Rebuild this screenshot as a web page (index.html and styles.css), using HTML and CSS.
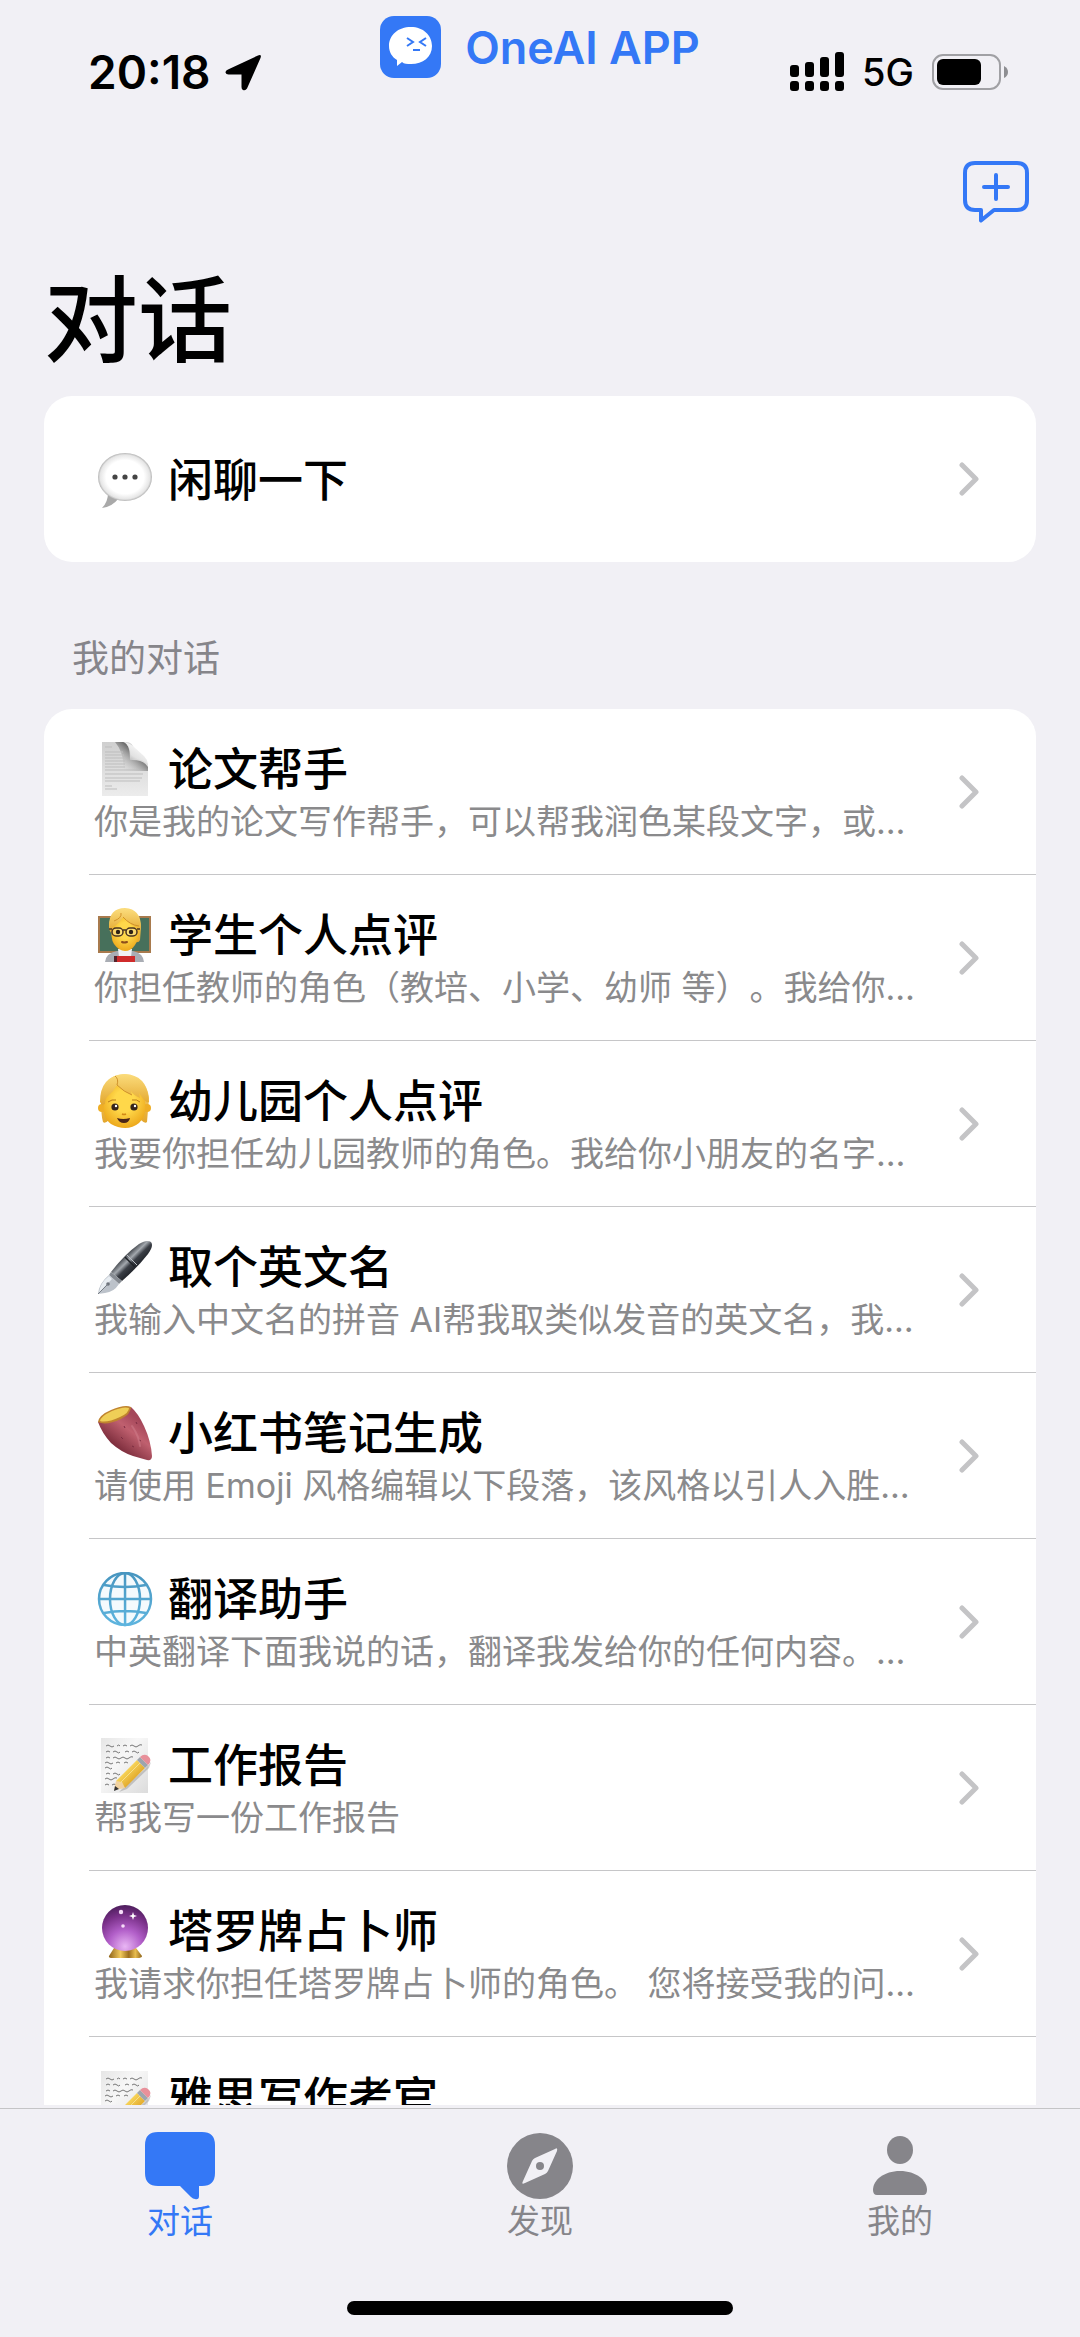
FILE: index.html
```
<!DOCTYPE html>
<html lang="zh-CN">
<head>
    <meta charset="UTF-8">
    <meta name="viewport" content="width=device-width, initial-scale=1.0">
    <title>OneAI APP</title>
    <link rel="stylesheet" href="styles.css">
</head>
<body>
    <!-- Shared icons -->
    <svg class="sprite" width="0" height="0" aria-hidden="true">
        <defs>
            <linearGradient id="paper" x1="0" y1="0" x2="1" y2="1">
                <stop offset="0" stop-color="#e6e6e6"/>
                <stop offset="0.4" stop-color="#f7f7f7"/>
                <stop offset="1" stop-color="#dcdcdc"/>
            </linearGradient>
            <linearGradient id="pencil" x1="0" y1="0" x2="1" y2="1">
                <stop offset="0.3" stop-color="#fbdc62"/>
                <stop offset="0.7" stop-color="#e0a526"/>
            </linearGradient>
            <radialGradient id="skin" cx="0.5" cy="0.4" r="0.6">
                <stop offset="0.4" stop-color="#ffd84a"/>
                <stop offset="1" stop-color="#eda91c"/>
            </radialGradient>
            <linearGradient id="hair" x1="0" y1="0" x2="0" y2="1">
                <stop offset="0" stop-color="#fbdc7c"/>
                <stop offset="1" stop-color="#e3a62d"/>
            </linearGradient>
        </defs>
        <symbol id="chevron" viewBox="0 0 20 34">
            <path d="M3 3L17 17L3 31" fill="none" stroke="#c4c4c6" stroke-width="5" stroke-linecap="round" stroke-linejoin="round"/>
        </symbol>
        <symbol id="memo" viewBox="0 0 56 56">
            <rect x="4" y="0" width="47" height="55" fill="url(#paper)"/>
            <g fill="none" stroke="#777" stroke-width="1">
                <path d="M9 8q2-2 4 0t4 0m3 0q2-2 3 0m3 0q2-2 4 0m3 0q2-2 4 0t4 0t4-1"/>
                <path d="M9 14q2-2 4 0m3 0q2-2 4 0t3 0m5 0q2-2 4 0m3 0q2-2 4 0t3 0"/>
                <path d="M9 20q2-2 4 0m3 0q2-2 4 0t4 0t4 0t4 0t4-1"/>
                <path d="M8 25q2-2 4 0t4 0m3 0q2-2 4 0m4 0q2-2 4 0"/>
                <path d="M8 30q2-2 4 0t3 0"/>
                <path d="M9 36q2-2 4 0m3 0q2-2 4 0t3 0"/>
                <path d="M8 41q2-2 4 0t4 0t4-1"/>
                <path d="M8 47q2-2 4 0m3 0q2-2 4 0"/>
            </g>
            <path d="M22 54L30 51L52 30L54 24L48 31L27 49Z" fill="#999" opacity="0.5"/>
            <path d="M19 43L40 22L48 30L28 50Z" fill="url(#pencil)"/>
            <path d="M19 43L17 52L28 50L25 44Z" fill="#f1d2a0"/>
            <path d="M18 48L17 53L22 51Z" fill="#333"/>
            <path d="M22 46L43 25" stroke="#f7e08a" stroke-width="1"/>
            <path d="M40 22L43 19L51 27L48 30Z" fill="#9da5ad"/>
            <path d="M43 19Q47 15 51 18Q56 22 51 27Z" fill="#e8909a"/>
        </symbol>
    </svg>

    <div class="app">
        <header class="status-bar">
            <div class="status-left">
                <span class="time">20:18</span>
                <svg width="37" height="37" viewBox="0 0 37 37" aria-hidden="true">
                    <path d="M3 15.500L33 1.500Q37 0 35.500 4L22 34.500Q20.500 37 18 36Q16.500 35.500 16.500 33V20.500H3.500Q1 20.500 .5 18.500Q.2 16.800 3 15.500Z"/>
                </svg>
            </div>
            <div class="brand">
                <svg width="61" height="62" viewBox="0 0 61 62" aria-hidden="true">
                    <rect width="61" height="62" rx="14" fill="#3478f6"/>
                    <path d="M31 11C43 11 52 19 52 30C52 41 43 48 31 48C27 48 24 48 22 46L17 50L17 44C12 41 9 36 9 30C9 19 18 11 31 11Z" fill="#fff"/>
                    <path d="M27 22L33 26L27 30M46 22L40 26L46 30M33 34H40" fill="none" stroke="#3478f6" stroke-width="2"/>
                </svg>
                <span class="brand-name">OneAI APP</span>
            </div>
            <div class="status-right">
                <svg width="54" height="40" viewBox="0 0 54 40" aria-hidden="true">
                    <rect x="0" y="13" width="9" height="12" rx="3"/>
                    <rect x="15" y="10" width="9" height="15" rx="3"/>
                    <rect x="30" y="5" width="9" height="20" rx="3"/>
                    <rect x="45" y="0" width="9" height="25" rx="3"/>
                    <rect x="0" y="29" width="9" height="10" rx="3"/>
                    <rect x="15" y="29" width="9" height="10" rx="3"/>
                    <rect x="30" y="29" width="9" height="10" rx="3"/>
                    <rect x="45" y="29" width="9" height="10" rx="3"/>
                </svg>
                <span class="network">5G</span>
                <svg width="76" height="36" viewBox="0 0 76 36" aria-hidden="true">
                    <rect x="1" y="1" width="67" height="34" rx="10" fill="none" stroke="#a0a0a4" stroke-width="2"/>
                    <rect x="5" y="5" width="44" height="26" rx="6"/>
                    <path d="M72 12Q76 14 76 18T72 24Z" fill="#8e8e92"/>
                </svg>
            </div>
        </header>

        <div class="nav-bar">
            <button type="button" class="new-chat" aria-label="新建对话">
                <svg width="66" height="62" viewBox="0 0 66 62" aria-hidden="true">
                    <path d="M12 2H54Q64 2 64 12V39Q64 49 54 49H31L18 59.500V49H12Q2 49 2 39V12Q2 2 12 2Z" fill="none" stroke="#3478f6" stroke-width="4" stroke-linejoin="round"/>
                    <path d="M21 26H45M33 14V38" stroke="#3478f6" stroke-width="4" stroke-linecap="round"/>
                </svg>
            </button>
        </div>

        <main class="content">
            <h1>对话</h1>

            <ul class="card">
                <li class="row">
                    <a href="#" class="row-link">
                        <div class="row-text">
                            <div class="row-title">
                                <svg class="emoji" viewBox="0 0 56 56" aria-hidden="true">
                                    <defs>
                                        <radialGradient id="bubble" cx="0.5" cy="0.5" r="0.5">
                                            <stop offset="0.7" stop-color="#fff"/>
                                            <stop offset="0.92" stop-color="#e6e6e6"/>
                                            <stop offset="1" stop-color="#b4b4b4"/>
                                        </radialGradient>
                                    </defs>
                                    <path d="M11 40Q11 49 5 55Q15 54 22 45Z" fill="#a9a9a9"/>
                                    <ellipse cx="28" cy="24" rx="27" ry="24" fill="url(#bubble)"/>
                                    <circle cx="18" cy="24" r="2.600" fill="#444"/>
                                    <circle cx="28" cy="24" r="2.600" fill="#444"/>
                                    <circle cx="38" cy="24" r="2.600" fill="#444"/>
                                </svg>
                                <h2>闲聊一下</h2>
                            </div>
                        </div>
                        <svg class="chevron" aria-hidden="true"><use href="#chevron"/></svg>
                    </a>
                </li>
            </ul>

            <h3 class="section-title">我的对话</h3>

            <ul class="card">
                <li class="row">
                    <a href="#" class="row-link">
                        <div class="row-text">
                            <div class="row-title">
                                <svg class="emoji" viewBox="0 0 56 56" aria-hidden="true">
                                    <defs>
                                        <linearGradient id="sheet" x1="0" y1="0" x2="0" y2="1">
                                            <stop offset="0" stop-color="#cfcfcf"/>
                                            <stop offset="1" stop-color="#ececec"/>
                                        </linearGradient>
                                        <linearGradient id="curl" x1="0.2" y1="1" x2="0.8" y2="0.1">
                                            <stop offset="0" stop-color="#9a9a9a"/>
                                            <stop offset="0.4" stop-color="#e2e2e2"/>
                                            <stop offset="1" stop-color="#fff"/>
                                        </linearGradient>
                                        <linearGradient id="curlShade" x1="1" y1="0" x2="0" y2="1">
                                            <stop offset="0.3" stop-color="#4a4a4a"/>
                                            <stop offset="0.9" stop-color="#ddd" stop-opacity="0"/>
                                        </linearGradient>
                                    </defs>
                                    <path d="M5 0H29Q36 0 37 8L51 22V54H5Z" fill="url(#sheet)"/>
                                    <path d="M18 0H26Q33 1 33 18Q46 17 51 25V29H26Q28 12 18 0Z" fill="url(#curlShade)"/>
                                    <path d="M27 0Q33 1 37 5L47 14Q51 18 51 23Q46 16 33 18Q35 5 27 0Z" fill="url(#curl)"/>
                                    <path d="M8 5H15M8 10H26M8 13H27M8 16H28M8 19H28M8 22H28M8 25H28M8 28H42M8 32H46M8 36H45M8 39H43M8 44H15M8 47H20" stroke="#bdbdbd" stroke-width="1"/>
                                </svg>
                                <h2>论文帮手</h2>
                            </div>
                            <p>你是我的论文写作帮手，可以帮我润色某段文字，或…</p>
                        </div>
                        <svg class="chevron" aria-hidden="true"><use href="#chevron"/></svg>
                    </a>
                </li>
                <li class="row">
                    <a href="#" class="row-link">
                        <div class="row-text">
                            <div class="row-title">
                                <svg class="emoji" viewBox="0 0 56 56" aria-hidden="true">
                                    <rect x="1" y="8" width="53" height="37" fill="#a87a4d"/>
                                    <rect x="3" y="10" width="49" height="33" fill="#47705b"/>
                                    <path d="M8 54Q9 45 20 43H36Q46 45 47 54Z" fill="#a9adb4"/>
                                    <path d="M21 41H35L34 49H22Z" fill="#f0f2f4"/>
                                    <rect x="17" y="48" width="21" height="6" fill="#cf2b2b"/>
                                    <rect x="17" y="48" width="3" height="6" fill="#54222a"/>
                                    <path d="M12 18Q12 0 28 0Q44 1 44 19L43 32Q42 35 38 34L34 14H16L15 24Q12 24 12 18Z" fill="url(#hair)"/>
                                    <path d="M15 16Q13 30 17 36Q22 43 28 43Q34 43 38 37Q43 30 42 20Q36 17 27 9Z" fill="url(#skin)"/>
                                    <path d="M12 20Q12 3 26 1Q42 2 44 20Q36 20 26 9Q22 16 16 19L14 25Z" fill="url(#hair)"/>
                                    <path d="M17 13Q25 10 24 5M26 9Q33 17 42 18" fill="none" stroke="#d1922a" stroke-width="1"/>
                                    <g fill="#fff" fill-opacity="0.25" stroke="#493321" stroke-width="1.500">
                                        <rect x="15" y="20" width="11" height="8" rx="4"/>
                                        <rect x="29" y="20" width="11" height="8" rx="4"/>
                                    </g>
                                    <path d="M26 22H29M12 21H15M40 21H43" stroke="#493321" stroke-width="1.500"/>
                                    <circle cx="21" cy="24" r="2.200" fill="#2e2016"/>
                                    <circle cx="34" cy="24" r="2.200" fill="#2e2016"/>
                                    <path d="M25 34Q27 35 30 34" fill="none" stroke="#8d4e1b" stroke-width="2" stroke-linecap="round"/>
                                </svg>
                                <h2>学生个人点评</h2>
                            </div>
                            <p>你担任教师的角色（教培、小学、幼师 等）。我给你…</p>
                        </div>
                        <svg class="chevron" aria-hidden="true"><use href="#chevron"/></svg>
                    </a>
                </li>
                <li class="row">
                    <a href="#" class="row-link">
                        <div class="row-text">
                            <div class="row-title">
                                <svg class="emoji" viewBox="0 0 56 56" aria-hidden="true">
                                    <path d="M6 48Q4 42 4 24Q7 0 28 0Q49 1 52 24L50 48Q48 50 44 46H12Q8 50 6 48Z" fill="url(#hair)"/>
                                    <circle cx="5" cy="34" r="4" fill="#efae25"/>
                                    <circle cx="50" cy="34" r="4" fill="#efae25"/>
                                    <path d="M7 28Q5 44 14 50Q21 54 28 54Q36 54 42 49Q50 43 48 27Q42 10 28 9Q12 12 7 28Z" fill="url(#skin)"/>
                                    <path d="M3 28Q3 2 27 0Q51 2 52 28Q50 29 47 26Q45 23 42 19L43 24Q36 21 34 17L35 21Q25 17 20 11Q17 17 12 21Q8 24 8 30L5 31Z" fill="url(#hair)"/>
                                    <path d="M20 11Q22 5 18 2M20 11Q27 18 35 21" fill="none" stroke="#cf922b" stroke-width="1"/>
                                    <circle cx="18" cy="33" r="3.600" fill="#36251a"/>
                                    <circle cx="37" cy="33" r="3.600" fill="#36251a"/>
                                    <circle cx="19" cy="32" r="1.200" fill="#fff"/>
                                    <circle cx="38" cy="32" r="1.200" fill="#fff"/>
                                    <path d="M11 28Q15 25 19 26M35 26Q40 25 43 28" fill="none" stroke="#b97a19" stroke-width="1"/>
                                    <path d="M25 40Q27 41 29 40" fill="none" stroke="#d28a16" stroke-width="1.500"/>
                                    <path d="M20 44Q26 46 33 44Q32 49 27 49Q22 49 20 44Z" fill="#4a2518"/>
                                </svg>
                                <h2>幼儿园个人点评</h2>
                            </div>
                            <p>我要你担任幼儿园教师的角色。我给你小朋友的名字…</p>
                        </div>
                        <svg class="chevron" aria-hidden="true"><use href="#chevron"/></svg>
                    </a>
                </li>
                <li class="row">
                    <a href="#" class="row-link">
                        <div class="row-text">
                            <div class="row-title">
                                <svg class="emoji" viewBox="0 0 56 56" aria-hidden="true">
                                    <defs>
                                        <linearGradient id="barrel" x1="0.35" y1="0.35" x2="0.65" y2="0.65">
                                            <stop offset="0" stop-color="#3c4046"/>
                                            <stop offset="0.35" stop-color="#a3a8ae"/>
                                            <stop offset="0.6" stop-color="#3a3e45"/>
                                            <stop offset="1" stop-color="#202329"/>
                                        </linearGradient>
                                    </defs>
                                    <path d="M14 32Q28 14 42 4Q50-1 54 2Q57 6 51 14Q41 27 25 41Z" fill="url(#barrel)"/>
                                    <path d="M28 17L38 27" stroke="#1e2126" stroke-width="1.500"/>
                                    <path d="M30 15L40 25" stroke="#b9bdc3" stroke-width="1"/>
                                    <path d="M14 32L25 41L22 44L12 35Z" fill="#868b92"/>
                                    <path d="M12 35L22 44Q17 52 8 53L1 54Q2 43 12 35Z" fill="#bcc2ca"/>
                                    <path d="M12 36L15 39Q9 45 2 53Q3 43 12 36Z" fill="#e8edf2"/>
                                    <circle cx="11" cy="44" r="1.800" fill="#6d737b"/>
                                    <path d="M1 54L11 44" stroke="#777d85" stroke-width="1"/>
                                </svg>
                                <h2>取个英文名</h2>
                            </div>
                            <p>我输入中文名的拼音 AI帮我取类似发音的英文名，我…</p>
                        </div>
                        <svg class="chevron" aria-hidden="true"><use href="#chevron"/></svg>
                    </a>
                </li>
                <li class="row">
                    <a href="#" class="row-link">
                        <div class="row-text">
                            <div class="row-title">
                                <svg class="emoji" viewBox="0 0 56 56" aria-hidden="true">
                                    <defs>
                                        <linearGradient id="potato" x1="0.7" y1="0.2" x2="0.3" y2="0.7">
                                            <stop offset="0" stop-color="#a5475a"/>
                                            <stop offset="0.4" stop-color="#c0606f"/>
                                            <stop offset="1" stop-color="#80303f"/>
                                        </linearGradient>
                                    </defs>
                                    <path d="M1 16Q5 27 14 37Q24 46 36 50L50 54Q55 55 55 50Q54 35 47 20Q41 7 34 1Z" fill="url(#potato)"/>
                                    <path d="M1 16Q2 9 14 4Q28-2 34 1Q34 8 24 13Q9 20 1 16Z" fill="#c0842f"/>
                                    <path d="M3 15Q4 10 15 5Q27 0 32 2Q32 7 23 11Q10 17 3 15Z" fill="#efcf57"/>
                                    <path d="M39 16L40 18M27 20L28 22M42 34L44 35M24 31L26 33M35 40L37 41" stroke="#7b2c41" stroke-width="1"/>
                                    <path d="M35 20Q42 30 43 40" fill="none" stroke="#d2808e" stroke-width="2" opacity="0.5" stroke-linecap="round"/>
                                </svg>
                                <h2>小红书笔记生成</h2>
                            </div>
                            <p>请使用 Emoji 风格编辑以下段落，该风格以引人入胜…</p>
                        </div>
                        <svg class="chevron" aria-hidden="true"><use href="#chevron"/></svg>
                    </a>
                </li>
                <li class="row">
                    <a href="#" class="row-link">
                        <div class="row-text">
                            <div class="row-title">
                                <svg class="emoji" viewBox="0 0 56 56" aria-hidden="true">
                                    <defs>
                                        <linearGradient id="globe" x1="0" y1="0" x2="0" y2="56" gradientUnits="userSpaceOnUse">
                                            <stop offset="0" stop-color="#4795bf"/>
                                            <stop offset="1" stop-color="#5fb6e0"/>
                                        </linearGradient>
                                    </defs>
                                    <g fill="none" stroke="url(#globe)" stroke-width="2.500">
                                        <circle cx="28" cy="27" r="26" fill="#f4fafd"/>
                                        <ellipse cx="28" cy="27" rx="15" ry="26"/>
                                        <path d="M28 1L28.100 53M2 27L54 27.100M7 13Q28 17 49 13M7 41Q28 37 49 41"/>
                                    </g>
                                </svg>
                                <h2>翻译助手</h2>
                            </div>
                            <p>中英翻译下面我说的话，翻译我发给你的任何内容。…</p>
                        </div>
                        <svg class="chevron" aria-hidden="true"><use href="#chevron"/></svg>
                    </a>
                </li>
                <li class="row">
                    <a href="#" class="row-link">
                        <div class="row-text">
                            <div class="row-title">
                                <svg class="emoji" aria-hidden="true"><use href="#memo"/></svg>
                                <h2>工作报告</h2>
                            </div>
                            <p>帮我写一份工作报告</p>
                        </div>
                        <svg class="chevron" aria-hidden="true"><use href="#chevron"/></svg>
                    </a>
                </li>
                <li class="row">
                    <a href="#" class="row-link">
                        <div class="row-text">
                            <div class="row-title">
                                <svg class="emoji" viewBox="0 0 56 56" aria-hidden="true">
                                    <defs>
                                        <radialGradient id="ball" cx="0.5" cy="0.9" r="0.9">
                                            <stop offset="0" stop-color="#e9b6f4"/>
                                            <stop offset="0.4" stop-color="#b25fc9"/>
                                            <stop offset="0.75" stop-color="#793088"/>
                                            <stop offset="1" stop-color="#4d1e5c"/>
                                        </radialGradient>
                                        <linearGradient id="stand">
                                            <stop offset="0" stop-color="#8f6419"/>
                                            <stop offset="0.35" stop-color="#f1ca5d"/>
                                            <stop offset="0.6" stop-color="#9e6e1e"/>
                                            <stop offset="0.8" stop-color="#e8bd4e"/>
                                            <stop offset="1" stop-color="#8f6419"/>
                                        </linearGradient>
                                    </defs>
                                    <path d="M17 44H39L45 52Q45 54 40 54H16Q11 54 12 52Z" fill="url(#stand)"/>
                                    <circle cx="28" cy="24" r="23" fill="url(#ball)"/>
                                    <path d="M36 8L37 11L40 12L37 13L36 16L35 13L32 12L35 11Z" fill="#fff"/>
                                    <circle cx="24" cy="8" r="2.200" fill="#f6dcf8"/>
                                    <circle cx="26" cy="22" r="1.800" fill="#f6dcf8"/>
                                </svg>
                                <h2>塔罗牌占卜师</h2>
                            </div>
                            <p>我请求你担任塔罗牌占卜师的角色。 您将接受我的问…</p>
                        </div>
                        <svg class="chevron" aria-hidden="true"><use href="#chevron"/></svg>
                    </a>
                </li>
                <li class="row">
                    <a href="#" class="row-link">
                        <div class="row-text">
                            <div class="row-title">
                                <svg class="emoji" aria-hidden="true"><use href="#memo"/></svg>
                                <h2>雅思写作考官</h2>
                            </div>
                            <p></p>
                        </div>
                    </a>
                </li>
            </ul>
        </main>

        <footer class="tab-bar">
            <nav class="tabs">
                <a href="#" class="tab active">
                    <svg width="70" height="68" viewBox="0 0 70 68" aria-hidden="true">
                        <path d="M13 0H57Q70 0 70 13V41Q70 54 57 54H54V64Q54 68 50 67Q48 67 46 65L35 54H13Q0 54 0 41V13Q0 0 13 0Z" fill="#3478f6"/>
                    </svg>
                    <span>对话</span>
                </a>
                <a href="#" class="tab">
                    <svg width="68" height="68" viewBox="0 0 68 68" aria-hidden="true">
                        <circle cx="34" cy="34" r="33" fill="#86858a"/>
                        <path d="M49 17Q52 15 51 19L42 39Q41 41 39 42L19 51Q15 53 17 49L26 29Q27 27 29 26Z" fill="#f1f0f5"/>
                        <circle cx="34" cy="34" r="4" fill="#86858a"/>
                    </svg>
                    <span>发现</span>
                </a>
                <a href="#" class="tab">
                    <svg width="68" height="68" viewBox="0 0 68 68" aria-hidden="true">
                        <ellipse cx="34" cy="18" rx="13" ry="14" fill="#86858a"/>
                        <path d="M34 39C50 39 61 48 61 58Q61 63 57 63H11Q7 63 7 58C7 48 18 39 34 39Z" fill="#86858a"/>
                    </svg>
                    <span>我的</span>
                </a>
            </nav>
            <div class="home-indicator"></div>
        </footer>
    </div>
</body>
</html>
```
FILE: styles.css
```
* {
    box-sizing: border-box;
    margin: 0;
    padding: 0;
}
body {
    font-family: Inter, "Noto Sans CJK SC", sans-serif;
    background-color: #f1f0f5;
    color: #000;
    text-spacing-trim: space-all;
}
a {
    color: inherit;
    text-decoration: none;
}
ul {
    list-style: none;
}
svg {
    display: block;
    flex-shrink: 0;
}
.sprite {
    position: absolute;
}
.app {
    display: flex;
    flex-direction: column;
    height: 100vh;
    overflow: hidden;
}

/* Status bar */
.status-bar {
    display: grid;
    grid-template-columns: 1fr auto 1fr;
    align-items: center;
    height: 144px;
    padding: 0 72px;
    flex-shrink: 0;
}
.status-left,
.status-right {
    display: flex;
    align-items: center;
    gap: 14px;
}
.status-left {
    padding-left: 16px;
}
.status-right {
    justify-content: flex-end;
    gap: 18px;
}
.time {
    font-size: 46px;
    font-weight: 600;
    line-height: 56px;
}
.network {
    font-size: 38px;
    font-weight: 500;
    line-height: 44px;
}
.brand {
    display: flex;
    align-items: center;
    gap: 24px;
    align-self: start;
    padding-top: 16px;
}
.brand-name {
    font-size: 45px;
    font-weight: 600;
    color: #3478f6;
}

/* Navigation bar */
.nav-bar {
    display: flex;
    justify-content: flex-end;
    padding: 17px 51px 0;
    flex-shrink: 0;
}
.new-chat {
    background: none;
    border: none;
    cursor: pointer;
}

/* Conversation list */
.content {
    flex: 1;
    min-height: 0;
    overflow: hidden;
    padding: 42px 44px 0;
}
h1 {
    font-size: 94px;
    font-weight: 500;
    line-height: 112px;
    margin-bottom: 19px;
}
.card {
    background-color: #fff;
    border-radius: 28px;
}
.section-title {
    font-size: 37px;
    font-weight: 400;
    line-height: 50px;
    color: #86858a;
    padding: 72px 28px 25px;
}
.row {
    padding-left: 45px;
}
.row-link {
    display: flex;
    align-items: center;
    justify-content: space-between;
    height: 166px;
    padding: 0 57px 0 5px;
    border-bottom: 1px solid #c6c6c8;
}
.row:last-child .row-link {
    border-bottom: none;
}
.row-text {
    min-width: 0;
    padding-top: 3px;
}
.row-title {
    display: flex;
    align-items: center;
    gap: 15px;
    padding-left: 3px;
}
.emoji {
    width: 56px;
    height: 56px;
}
.chevron {
    width: 20px;
    height: 34px;
}
.row h2 {
    font-size: 45px;
    font-weight: 500;
    line-height: 58px;
}
.row p {
    font-size: 34px;
    line-height: 46px;
    min-height: 46px;
    color: #8a8a8c;
    white-space: nowrap;
}

/* Tab bar */
.tab-bar {
    flex-shrink: 0;
    padding: 3px 0 22px;
    background-color: #f1f0f5;
}
.tabs {
    display: grid;
    grid-template-columns: repeat(3, 1fr);
    padding: 23px 0 58px;
    border-top: 1px solid #c4c4c6;
}
.tab {
    display: flex;
    flex-direction: column;
    align-items: center;
    font-size: 33px;
    line-height: 43px;
    color: #86858a;
}
.tab.active {
    color: #3478f6;
}
.home-indicator {
    width: 386px;
    height: 14px;
    margin: 0 auto;
    border-radius: 7px;
    background-color: #000;
}
```
